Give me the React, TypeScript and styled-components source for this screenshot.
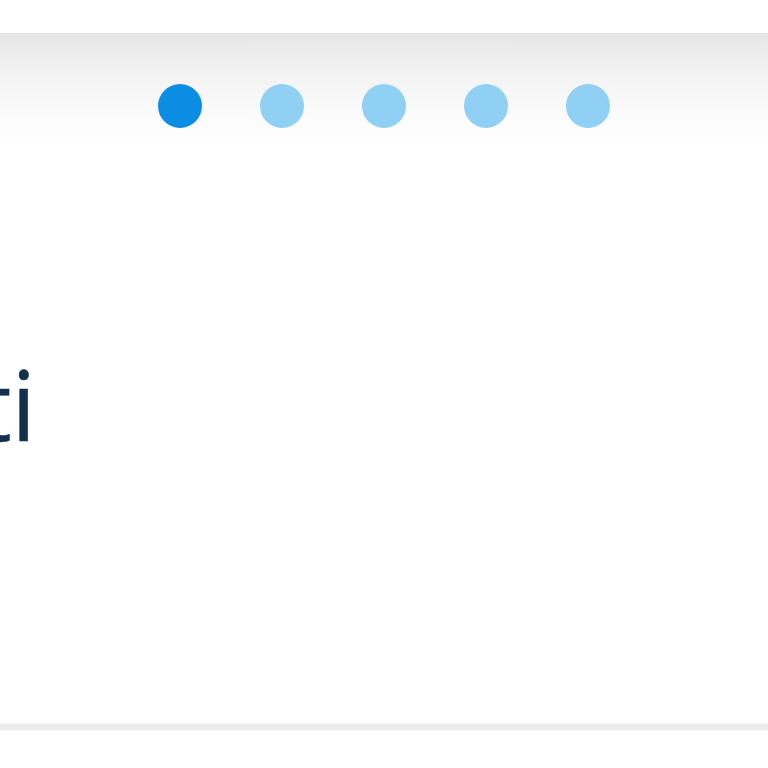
import styled, { createGlobalStyle } from "styled-components";

const GlobalStyle = createGlobalStyle`
  html, body {
    margin: 0;
    padding: 0;
    background: #ffffff;
    overflow: hidden;
  }
  body {
    font-family: "Open Sans", "Noto Sans", sans-serif;
  }
`;

const Page = styled.div`
  width: 768px;
  height: 768px;
  display: flex;
  flex-direction: column;
  overflow: hidden;
`;

const Pager = styled.div`
  margin-top: 33px;
  height: 117px;
  box-sizing: border-box;
  padding-top: 51px;
  padding-right: 1px;
  background: linear-gradient(to bottom, #e6e6e6 0%, #f3f3f3 35%, #fbfbfb 70%, #ffffff 100%);
  display: flex;
  justify-content: center;
  align-items: flex-start;
  gap: 58px;
`;

const Dot = styled.span<{ $active?: boolean }>`
  width: 44px;
  height: 44px;
  border-radius: 50%;
  background: ${({ $active }) => ($active ? "#0b8de3" : "#8fd0f4")};
`;

const Stage = styled.main`
  height: 573px;
  box-sizing: border-box;
  padding-top: 205px;
`;

// the title runs off to the left, only its last letters show
const TitleRow = styled.div`
  width: 36px;
  display: flex;
  justify-content: flex-end;
`;

const Title = styled.h1`
  margin: 0;
  font-family: "Open Sans", sans-serif;
  font-weight: 400;
  font-size: 97px;
  line-height: 1;
  color: #14304e;
  white-space: nowrap;
  -webkit-text-stroke: 0.6px #14304e;
`;

const Rule = styled.div`
  height: 6px;
  background: #ececec;
  border-top: 1px solid #f4f4f4;
  border-bottom: 1px solid #f6f6f6;
`;

export default function App() {
  const dots = [0, 1, 2, 3, 4];
  return (
    <>
      <GlobalStyle />
      <Page>
        <Pager>
          {dots.map((i) => (
            <Dot key={i} $active={i === 0} />
          ))}
        </Pager>
        <Stage>
          <TitleRow>
            <Title>Benvenuti</Title>
          </TitleRow>
        </Stage>
        <Rule />
      </Page>
    </>
  );
}
